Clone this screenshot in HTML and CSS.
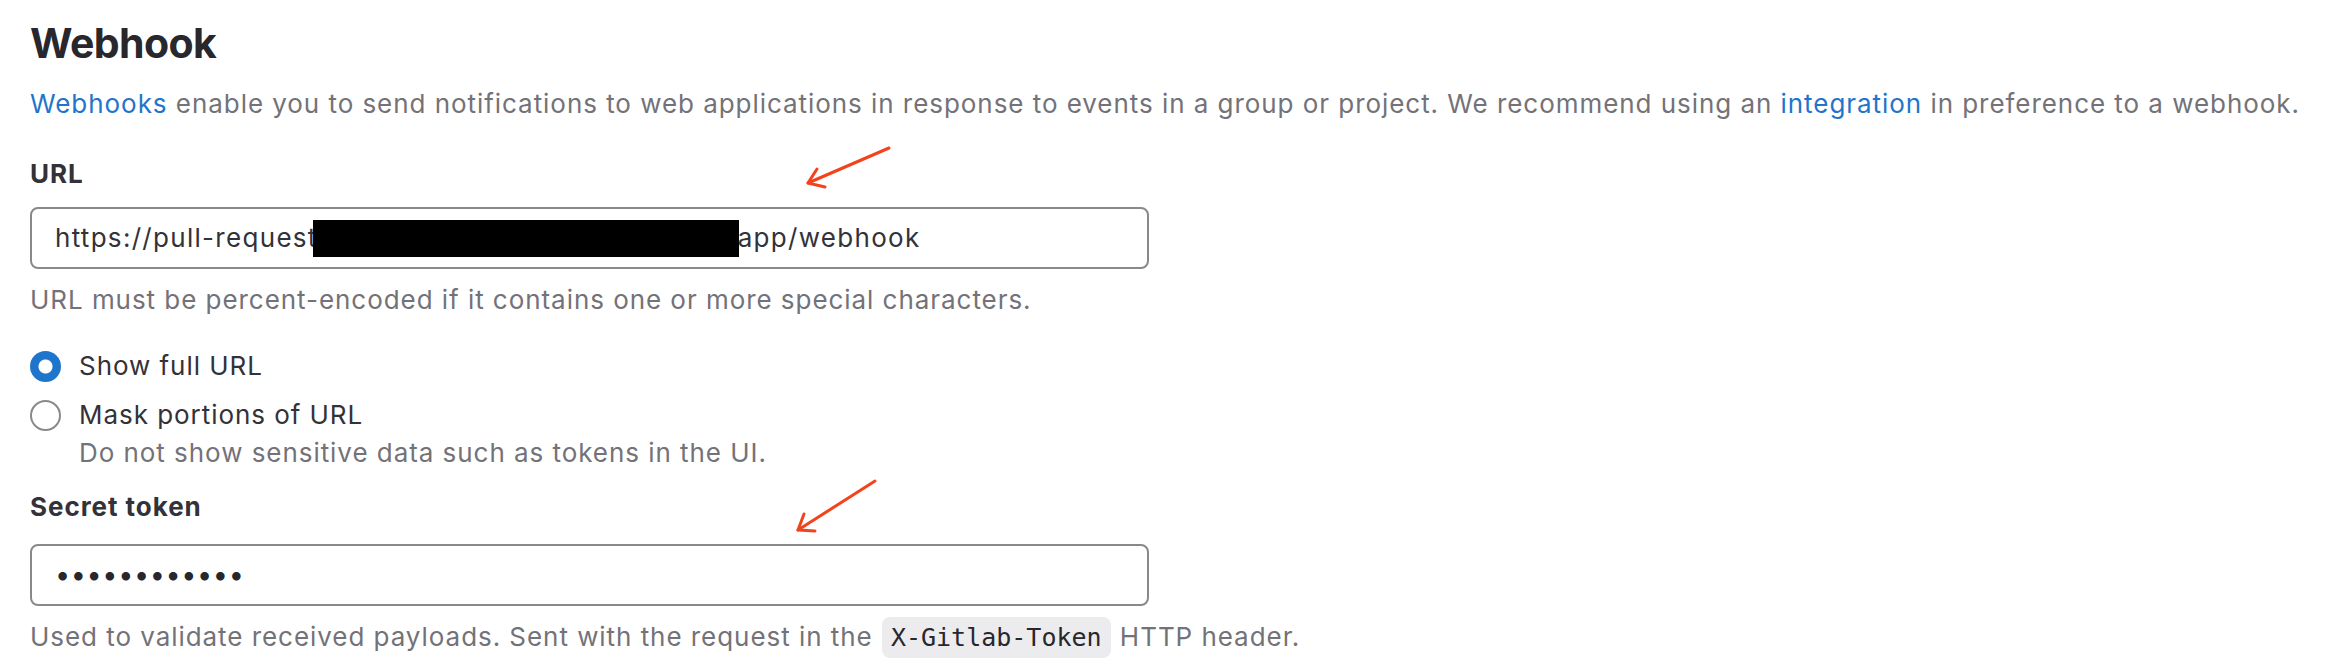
FILE: index.html
```html
<!DOCTYPE html>
<html lang="en">
<head>
<meta charset="utf-8">
<title>Webhook</title>
<link rel="stylesheet" href="styles.css">
</head>
<body>
<main class="page">
  <h2 class="title">Webhook</h2>
  <p class="desc"><a class="link" href="#">Webhooks</a> enable you to send notifications to web applications in response to events in a group or project. We recommend using an <a class="link" href="#">integration</a> in preference to a webhook.</p>

  <label class="field-label">URL</label>
  <div class="input url-input">
    <span>https://pull-request</span><span class="redact"></span><span>app/webhook</span>
  </div>
  <p class="help">URL must be percent-encoded if it contains one or more special characters.</p>

  <div class="radio-group">
    <div class="radio-row"><span class="radio checked"></span><span class="radio-label">Show full URL</span></div>
    <div class="radio-row second"><span class="radio"></span><span class="radio-label">Mask portions of URL</span></div>
    <p class="radio-help">Do not show sensitive data such as tokens in the UI.</p>
  </div>

  <label class="field-label secret-label">Secret token</label>
  <div class="input token-input"><span class="dots">••••••••••••</span></div>
  <p class="help">Used to validate received payloads. Sent with the request in the <code class="code">X-Gitlab-Token</code> HTTP header.</p>
</main>
<svg class="arrows" width="2338" height="670" viewBox="0 0 2338 670" aria-hidden="true">
  <g fill="none" stroke="#f3431d" stroke-width="3" stroke-linecap="round" stroke-linejoin="round">
    <path d="M889 148 L808 183"/>
    <path d="M817 169 L808 183 L825 187"/>
    <path d="M875 481 L798 530"/>
    <path d="M804 514 L798 530 L815 531"/>
  </g>
</svg>
</body>
</html>
```
FILE: styles.css
```css
html, body {
  margin: 0;
  padding: 0;
  background: #ffffff;
}
body {
  font-family: Inter, "Noto Sans", "Liberation Sans", sans-serif;
  font-size: 26px;
  line-height: 38px;
  letter-spacing: 0.95px;
  color: #333238;
  width: 2338px;
  height: 670px;
  overflow: hidden;
  position: relative;
}
.page {
  padding-left: 30px;
}
.title {
  margin: 18px 0 0;
  font-size: 41px;
  line-height: 50px;
  font-weight: 700;
  letter-spacing: -0.6px;
  color: #28272d;
}
.desc {
  margin: 17px 0 0;
  color: #737278;
}
.link {
  color: #1f75cb;
  text-decoration: none;
}
.field-label {
  display: block;
  margin-top: 32px;
  font-weight: 700;
  color: #333238;
}
.input {
  margin-top: 14px;
  width: 1119px;
  height: 62px;
  box-sizing: border-box;
  border: 2px solid #89888d;
  border-radius: 8px;
  display: flex;
  align-items: center;
  padding: 0 23px;
  color: #333238;
}
.url-input {
  letter-spacing: 1.3px;
}
.redact {
  display: inline-block;
  width: 426px;
  height: 37px;
  background: #000;
  margin-left: -5px;
  margin-right: -1px;
}
.help {
  margin: 12px 0 0;
  color: #737278;
}
.radio-group {
  margin-top: 28px;
}
.radio-row {
  display: flex;
  align-items: center;
  gap: 18px;
}
.radio-row.second {
  margin-top: 11px;
}
.radio {
  width: 31px;
  height: 31px;
  box-sizing: border-box;
  border-radius: 50%;
  border: 2px solid #89888d;
  background: #fff;
  flex: none;
}
.radio.checked {
  border: none;
  background: radial-gradient(circle, #ffffff 0 6.5px, #1f75cb 7.5px);
}
.radio-label {
  color: #333238;
}
.radio-help {
  margin: 0;
  padding-left: 49px;
  color: #737278;
}
.secret-label {
  margin-top: 16px;
}
.token-input {
  margin-top: 18px;
}
.dots {
  letter-spacing: 0.6px;
  font-size: 27px;
  color: #28272d;
}
.code {
  font-family: "DejaVu Sans Mono", "Liberation Mono", monospace;
  font-size: 25px;
  letter-spacing: 0;
  background: #ececef;
  color: #28272d;
  border-radius: 8px;
  padding: 6px 9px;
  margin: 0 1px;
}
.arrows {
  position: absolute;
  left: 0;
  top: 0;
  pointer-events: none;
}
```
